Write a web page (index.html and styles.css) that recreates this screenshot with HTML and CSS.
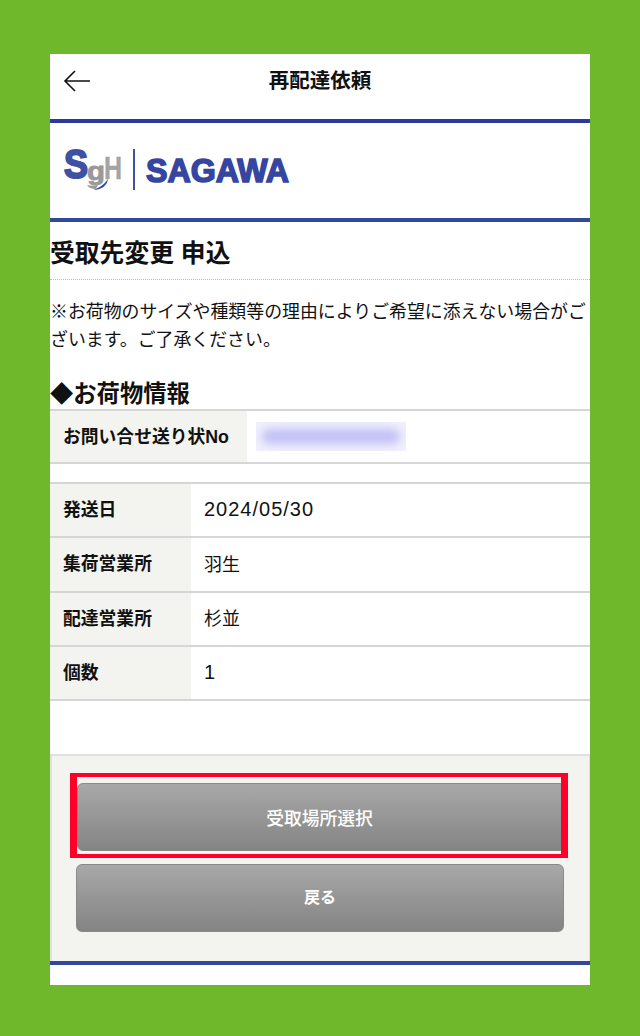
FILE: index.html
```html
<!DOCTYPE html>
<html lang="ja">

<head>
    <meta charset="UTF-8">
    <meta name="viewport" content="width=device-width, initial-scale=1.0">
    <title>再配達依頼</title>
    <link rel="stylesheet" href="styles.css">
</head>

<body>
    <div class="phone">
        <header class="app-bar">
            <svg class="back" width="28" height="24" viewBox="0 0 28 24" fill="none" stroke="#111" stroke-width="1.6">
                <path d="M27 12H2M12 2L2 12l10 10" />
            </svg>
            <h1>再配達依頼</h1>
        </header>

        <div class="logo-row">
            <svg class="logo" width="240" height="44" viewBox="0 0 240 44">
                <text x="1" y="29" class="logo-s" textLength="24" lengthAdjust="spacingAndGlyphs">S</text>
                <text x="41" y="30" class="logo-h" textLength="18" lengthAdjust="spacingAndGlyphs">H</text>
                <text x="24" y="31" class="logo-g" textLength="18" lengthAdjust="spacingAndGlyphs">g</text>
                <path d="M24 36c4 1 8 1 11 0l-2 4c-4 0-7-1-9-4z" fill="#9a9a9a" />
                <path d="M45 30c-1 7-7 11-15 11 6-2 11-5 15-11z" fill="#2f43a0" />
                <rect x="70" y="0" width="2" height="41" fill="#3f51a3" />
                <text x="83" y="33" class="logo-name" textLength="143" lengthAdjust="spacingAndGlyphs">SAGAWA</text>
            </svg>
        </div>

        <h2 class="page-title">受取先変更 申込</h2>
        <p class="note">※お荷物のサイズや種類等の理由によりご希望に添えない場合がございます。ご了承ください。</p>

        <h3 class="section-title">◆お荷物情報</h3>
        <div class="info-row no-row">
            <div class="label">お問い合せ送り状No</div>
            <div class="value"><div class="blurred"><span></span></div></div>
        </div>

        <div class="info-table">
            <div class="info-row">
                <div class="label">発送日</div>
                <div class="value num">2024/05/30</div>
            </div>
            <div class="info-row">
                <div class="label">集荷営業所</div>
                <div class="value">羽生</div>
            </div>
            <div class="info-row">
                <div class="label">配達営業所</div>
                <div class="value">杉並</div>
            </div>
            <div class="info-row">
                <div class="label">個数</div>
                <div class="value num">1</div>
            </div>
        </div>

        <div class="actions">
            <button class="btn btn-first">受取場所選択</button>
            <button class="btn btn-back">戻る</button>
            <div class="highlight"></div>
        </div>
        <div class="bottom"></div>
    </div>
</body>

</html>
```

FILE: styles.css
```css
* {
    margin: 0;
    padding: 0;
    box-sizing: border-box;
}

body {
    background-color: #6fb82b;
    padding: 54px 50px 51px;
    font-family: "Liberation Sans", "Noto Sans CJK JP", sans-serif;
    color: #111;
}

.phone {
    background-color: #fff;
    height: 931px;
}

.app-bar {
    height: 69px;
    border-bottom: 4px solid #2b3a9c;
    position: relative;
    display: flex;
    justify-content: center;
    padding-top: 13px;
}

.app-bar h1 {
    font-size: 20.5px;
    font-weight: bold;
    line-height: 28px;
}

.back {
    position: absolute;
    left: 13px;
    top: 15px;
}

.logo-row {
    height: 99px;
    border-bottom: 4px solid #33479f;
    padding: 26px 0 0 13px;
}

.logo {
    display: block;
    overflow: visible;
}

.logo-s {
    font: bold 40px "Liberation Sans", sans-serif;
    fill: #3f51a3;
    stroke: #3f51a3;
    stroke-width: 2;
}

.logo-g {
    font: bold 26px "Liberation Sans", sans-serif;
    fill: #999;
    stroke: #999;
    stroke-width: 0.8;
}

.logo-h {
    font: bold 32px "Liberation Sans", sans-serif;
    fill: #a4a4a4;
    stroke: #a4a4a4;
    stroke-width: 0.5;
}

.logo-name {
    font: bold 33px "Liberation Sans", sans-serif;
    fill: #3646a0;
    stroke: #3646a0;
    stroke-width: 1.6;
}

.page-title {
    height: 58px;
    border-bottom: 1px dotted #bbb;
    font-size: 24.8px;
    line-height: 63px;
}

.note {
    font-size: 17.9px;
    line-height: 28px;
    padding-top: 18px;
    height: 98px;
}

.section-title {
    font-size: 23.3px;
    line-height: 32px;
    height: 31px;
}

.info-row {
    display: flex;
    border-bottom: 2px solid #d6d6d6;
    height: 54.25px;
}

.no-row {
    border-top: 2px solid #d6d6d6;
    height: 55px;
}

.info-table {
    margin-top: 18px;
    border-top: 2px solid #d6d6d6;
}

.label {
    width: 141px;
    background-color: #f3f4ef;
    padding: 0 0 4px 13px;
    display: flex;
    align-items: center;
    font-size: 17.8px;
    font-weight: bold;
}

.no-row .label {
    width: 197px;
    flex-shrink: 0;
}

.value {
    padding: 0 0 3px 13px;
    display: flex;
    align-items: center;
    font-size: 18px;
}

.value.num {
    font-size: 20px;
    letter-spacing: 1px;
    padding-bottom: 1px;
}

.no-row .value {
    padding: 0 0 0 9px;
}

.blurred {
    width: 150px;
    height: 29px;
    padding: 7px 6px;
    background-color: #f1f0fd;
    overflow: hidden;
}

.blurred span {
    display: block;
    height: 15px;
    background-color: #c0bff4;
    border-radius: 7px;
    filter: blur(5px);
}

.actions {
    margin-top: 53px;
    height: 207px;
    background-color: #f3f4ef;
    border: 2px solid #e0e0e0;
    border-bottom: none;
    border-right-width: 1px;
    padding: 27px 24px 0;
    position: relative;
}

.btn {
    display: block;
    width: 488px;
    height: 68px;
    border: 1px solid #8a8a8a;
    border-radius: 6px;
    background: linear-gradient(#a8a8a8, #848484);
    color: #fff;
    font-family: inherit;
}

.btn-first {
    width: 485px;
    margin: 0 0 13px 1px;
    border-radius: 6px 2px 2px 6px;
    font-size: 17.8px;
    font-weight: 500;
}

.btn-back {
    font-size: 16px;
    font-weight: bold;
    padding-bottom: 5px;
}

/* 赤枠 */
.highlight {
    position: absolute;
    left: 18px;
    top: 17px;
    width: 498px;
    height: 85px;
    border-style: solid;
    border-color: #ff0028;
    border-width: 4px 7px;
}

.bottom {
    border-top: 4px solid #33479f;
}
```
